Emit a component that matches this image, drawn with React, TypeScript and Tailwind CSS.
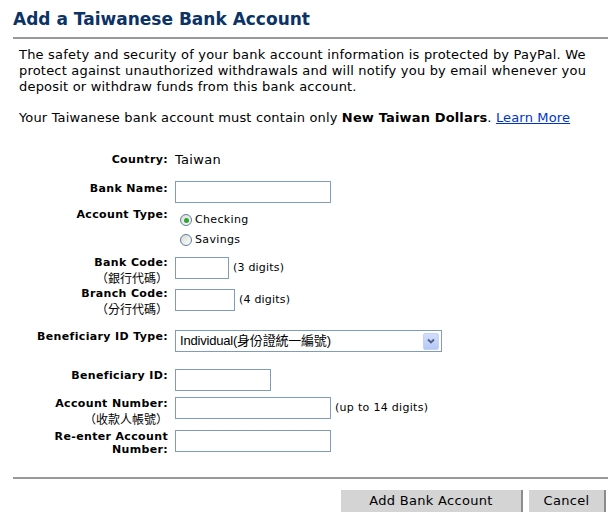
import React from "react";

const font = { fontFamily: '"DejaVu Sans", Verdana, sans-serif' };

function Label({ lines }: { lines: string[] }) {
  return (
    <div className="w-[168px] shrink-0 text-right">
      {lines.map((l, i) => (
        <div
          key={i}
          className={
            i === 0
              ? "text-[11px] font-bold leading-[14px] tracking-[0.35px] text-black"
              : "text-[12px] leading-[15px] text-black font-['Noto_Sans_CJK_TC',sans-serif]"
          }
        >
          {l}
        </div>
      ))}
    </div>
  );
}

function TextBox({ w }: { w: string }) {
  return <div className={`h-[22px] ${w} border border-[#7f9db9] bg-white`} />;
}

function Radio({ checked, label }: { checked?: boolean; label: string }) {
  return (
    <div className="flex items-center h-[20px]">
      <div className="w-[12px] h-[12px] ml-[5px] rounded-full border border-[#5c7da0] bg-gradient-to-br from-[#d8d8d2] to-white flex items-center justify-center">
        {checked && <div className="w-[5px] h-[5px] rounded-full bg-[#2ea52e]" />}
      </div>
      <span className="ml-[3px] text-[11px] tracking-[0.35px] text-black">{label}</span>
    </div>
  );
}

export default function App() {
  return (
    <div className="h-[512px] w-[608px] overflow-hidden bg-white" style={font}>
      <h1 className="pl-[13px] pt-[9px] text-[17px] leading-[20px] font-bold text-[#0b3366]">
        Add a Taiwanese Bank Account
      </h1>
      <div className="ml-[13px] mt-[8px] h-[2px] bg-[#999999]" />

      <div className="pl-[19px] mt-[8px] text-[13px] leading-[16px] tracking-[0.2px] text-black whitespace-nowrap">
        <p>
          The safety and security of your bank account information is protected by PayPal. We
          <br />
          protect against unauthorized withdrawals and will notify you by email whenever you
          <br />
          deposit or withdraw funds from this bank account.
        </p>
        <p className="mt-[15px] tracking-[0.15px]">
          Your Taiwanese bank account must contain only <b>New Taiwan Dollars</b>.{" "}
          <a href="#" className="text-[#0033cc] underline">
            Learn More
          </a>
        </p>
      </div>

      <div className="mt-[27px] text-[11px]">
        <div className="flex gap-[7px] h-[28px]">
          <Label lines={["Country:"]} />
          <span className="text-[13px] leading-[14px] tracking-[0.3px] text-black">Taiwan</span>
        </div>

        <div className="flex gap-[7px] h-[27px]">
          <div className="pt-[1px]">
            <Label lines={["Bank Name:"]} />
          </div>
          <TextBox w="w-[156px]" />
        </div>

        <div className="flex gap-[7px] h-[48px]">
          <Label lines={["Account Type:"]} />
          <div className="mt-[2px]">
            <Radio checked label="Checking" />
            <Radio label="Savings" />
          </div>
        </div>

        <div className="flex gap-[7px] h-[31px]">
          <Label lines={["Bank Code:", "（銀行代碼）"]} />
          <div className="flex items-center gap-[4px] mt-[1px] h-[22px]">
            <TextBox w="w-[54px]" />
            <span className="text-[11px] tracking-[0.2px] text-black">(3 digits)</span>
          </div>
        </div>

        <div className="flex gap-[7px] h-[43px]">
          <Label lines={["Branch Code:", "（分行代碼）"]} />
          <div className="flex items-center gap-[4px] mt-[2px] h-[22px]">
            <TextBox w="w-[60px]" />
            <span className="text-[11px] tracking-[0.2px] text-black">(4 digits)</span>
          </div>
        </div>

        <div className="flex gap-[7px] h-[38px]">
          <Label lines={["Beneficiary ID Type:"]} />
          <div className="h-[22px] w-[267px] border border-[#7f9db9] bg-white flex items-center pl-[4px] pr-[2px]">
            <span className="flex-1 text-[13px] text-black font-['Liberation_Sans','Noto_Sans_CJK_TC',sans-serif] tracking-[-0.2px]">
              Individual(身份證統一編號)
            </span>
            <div className="w-[16px] h-[17px] rounded-[2px] bg-gradient-to-b from-[#d2defc] to-[#b6c8f6] border border-[#c4d2f4] flex items-center justify-center">
              <svg width="8" height="6" viewBox="0 0 8 6">
                <path d="M1 1.5 L4 4.5 L7 1.5" stroke="#4d6185" strokeWidth="1.8" fill="none" />
              </svg>
            </div>
          </div>
        </div>

        <div className="flex gap-[7px] h-[29px]">
          <div className="pt-[1px]">
            <Label lines={["Beneficiary ID:"]} />
          </div>
          <div className="mt-[1px]">
            <TextBox w="w-[96px]" />
          </div>
        </div>

        <div className="flex gap-[7px] h-[33px]">
          <Label lines={["Account Number:", "（收款人帳號）"]} />
          <div className="flex items-center gap-[4px] h-[22px]">
            <TextBox w="w-[156px]" />
            <span className="text-[11px] tracking-[0.3px] text-black">(up to 14 digits)</span>
          </div>
        </div>

        <div className="flex gap-[7px] h-[22px]">
          <div className="w-[168px] shrink-0 text-right text-[11px] font-bold leading-[13px] tracking-[0.35px] text-black">
            <div>Re-enter Account</div>
            <div>Number:</div>
          </div>
          <TextBox w="w-[156px]" />
        </div>
      </div>

      <div className="ml-[13px] mt-[25px] h-[2px] bg-[#999999]" />

      <div className="mt-[11px] flex justify-end gap-[6px] pr-[2px]">
        <button className="h-[24px] w-[182px] bg-[#d4d4d4] border-r-2 border-b-2 border-[#8c8c8c] text-[13px] tracking-[0.3px] text-black">
          Add Bank Account
        </button>
        <button className="h-[24px] w-[77px] bg-[#d4d4d4] border-r-2 border-b-2 border-[#8c8c8c] text-[13px] tracking-[0.3px] text-black">
          Cancel
        </button>
      </div>
    </div>
  );
}
